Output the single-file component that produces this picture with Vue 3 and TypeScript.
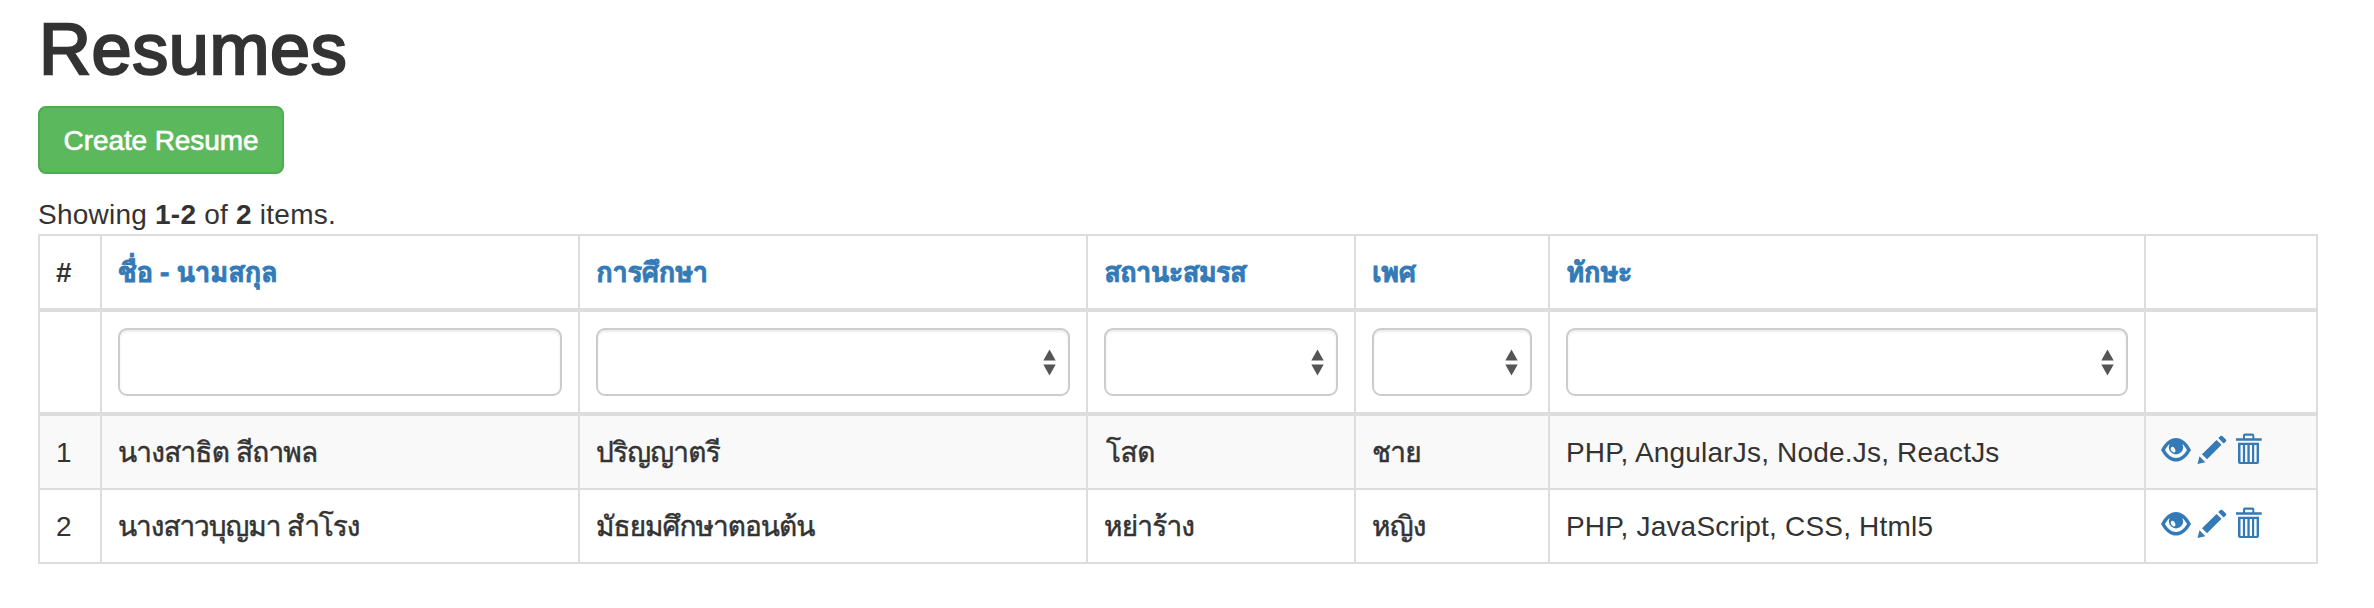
<script setup lang="ts">
type FilterKind = 'none' | 'text' | 'select'

interface Column {
  key: string
  label: string
  filter: FilterKind
}

interface Resume {
  id: number
  name: string
  education: string
  status: string
  gender: string
  skills: string
}

const columns: Column[] = [
  { key: 'name', label: 'ชื่อ - นามสกุล', filter: 'text' },
  { key: 'education', label: 'การศึกษา', filter: 'select' },
  { key: 'status', label: 'สถานะสมรส', filter: 'select' },
  { key: 'gender', label: 'เพศ', filter: 'select' },
  { key: 'skills', label: 'ทักษะ', filter: 'select' },
]

const resumes: Resume[] = [
  { id: 1, name: 'นางสาธิต สีถาพล', education: 'ปริญญาตรี', status: 'โสด', gender: 'ชาย', skills: 'PHP, AngularJs, Node.Js, ReactJs' },
  { id: 2, name: 'นางสาวบุญมา สำโรง', education: 'มัธยมศึกษาตอนต้น', status: 'หย่าร้าง', gender: 'หญิง', skills: 'PHP, JavaScript, CSS, Html5' },
]
</script>

<template>
  <main class="page">
    <h1>Resumes</h1>
    <a class="create">Create Resume</a>
    <div class="summary">Showing <b>1-2</b> of <b>2</b> items.</div>
    <table class="grid">
      <colgroup>
        <col class="c-index" />
        <col v-for="c in columns" :key="c.key" :class="'c-' + c.key" />
        <col class="c-actions" />
      </colgroup>
      <thead>
        <tr class="head">
          <th>#</th>
          <th v-for="c in columns" :key="c.key"><a :class="'h-' + c.key">{{ c.label }}</a></th>
          <th></th>
        </tr>
        <tr class="filters">
          <td></td>
          <td v-for="c in columns" :key="c.key">
            <div class="control">
              <svg v-if="c.filter === 'select'" class="arrows" viewBox="0 0 13 27">
                <path d="M6.500 0.600 12.700 11.500H0.300zM0.300 15.500H12.700L6.500 26.400z" fill="#555" />
              </svg>
            </div>
          </td>
          <td></td>
        </tr>
      </thead>
      <tbody>
        <tr v-for="r in resumes" :key="r.id">
          <td>{{ r.id }}</td>
          <td class="thai name">{{ r.name }}</td>
          <td class="thai education">{{ r.education }}</td>
          <td class="thai status">{{ r.status }}</td>
          <td class="thai gender">{{ r.gender }}</td>
          <td class="skills">{{ r.skills }}</td>
          <td class="tools">
            <div class="actions">
              <svg class="eye" viewBox="0 0 32 34">
                <path fill-rule="evenodd" d="M1 18C5 10.200 10.500 6 16 6s11 4.200 15 12C27 25.400 21.500 29.600 16 29.600S5 25.400 1 18zM5 18C8 23.200 11.800 25.900 16 25.900S24 23.200 27 18C25.600 15.600 24.200 13.700 22.500 12H9.500C7.800 13.700 6.400 15.600 5 18z" />
                <path fill-rule="evenodd" d="M16 8a7.200 7.200 0 1 1 0 14.400A7.200 7.200 0 0 1 16 8zM11.700 14.900c-1.300.7-1.200 2.400-.4 3.700.8 1.400 2.200 2.300 3.400 1.700 1.100-.7.9-2.200.1-3.600-.7-1.300-1.800-2.400-3.100-1.800z" />
              </svg>
              <svg class="pencil" viewBox="0 0 32 34">
                <path d="M1.500 32 3.500 24.300 9.300 30.200zM6 22.200 20.500 7.900 25.500 12.800 11 27.200zM22.300 6.100 24.300 4.100Q25.300 3.200 26.300 4.100L29.900 7.600Q30.800 8.600 29.900 9.600L27.600 11.500z" />
              </svg>
              <svg class="trash" viewBox="0 0 32 34">
                <path fill-rule="evenodd" d="M11 6.300V3.300Q11 1.500 13 1.500H20.300Q22.300 1.500 22.300 3.300V6.300H29.700V8.700H4V6.300zM13 6.300H20.300V3.700H13zM6 10.700H27V30Q27 32 25 32H8Q6 32 6 30zM8.500 13V29.900H10.900V13zM13.100 13V29.900H15.400V13zM17.700 13V29.900H20V13zM22.200 13V29.900H24.600V13z" />
              </svg>
            </div>
          </td>
        </tr>
      </tbody>
    </table>
  </main>
</template>

<style>
body {
  margin: 0;
  background: #fff;
}
</style>

<style scoped>
.page {
  box-sizing: border-box;
  width: 2356px;
  height: 608px;
  padding: 10px 38px 0;
  font: 28px/40px "Liberation Sans", Loma, "Noto Sans Thai Looped", "Noto Sans Thai", sans-serif;
  color: #333;
}
h1 {
  margin: 0 0 17px;
  padding-left: 1px;
  font-size: 72px;
  line-height: 79px;
  font-weight: 400;
  letter-spacing: 0.6px;
  -webkit-text-stroke: 2.4px #333;
}
.create {
  display: flex;
  align-items: center;
  justify-content: center;
  box-sizing: border-box;
  width: 246px;
  height: 68px;
  margin-bottom: 20px;
  padding-top: 2px;
  border: 2px solid #4cae4c;
  border-radius: 8px;
  background: #5cb85c;
  color: #fff;
  letter-spacing: -0.1px;
  -webkit-text-stroke: 0.6px #fff;
}
.summary {
  box-sizing: border-box;
  height: 40px;
  padding-top: 1px;
  letter-spacing: 0.23px;
}
.grid {
  width: 2280px;
  table-layout: fixed;
  border-collapse: separate;
  border-spacing: 0;
  border: solid #ddd;
  border-width: 2px 0 0 2px;
}
.c-index { width: 62px; }
.c-name { width: 478px; }
.c-education { width: 508px; }
.c-status { width: 268px; }
.c-gender { width: 194px; }
.c-skills { width: 596px; }
.c-actions { width: 172px; }
th,
td {
  box-sizing: border-box;
  height: 74px;
  padding: 2px 16px 0;
  border: solid #ddd;
  border-width: 0 2px 2px 0;
  text-align: left;
  vertical-align: middle;
  line-height: 40px;
  white-space: nowrap;
}
th {
  height: 76px;
  border-bottom-width: 4px;
}
th a {
  color: #337ab7;
  letter-spacing: -0.75px;
  -webkit-text-stroke: 0.9px #337ab7;
}
th .h-name {
  letter-spacing: -0.5px;
}
th .h-status {
  letter-spacing: -1.1px;
}
.filters td {
  height: 104px;
  padding-top: 0;
  border-bottom-width: 4px;
}
.control {
  display: flex;
  align-items: center;
  justify-content: flex-end;
  box-sizing: border-box;
  height: 68px;
  padding-right: 12px;
  border: 2px solid #ccc;
  border-radius: 9px;
  box-shadow: inset 0 2px 2px rgba(0, 0, 0, 0.075);
}
.arrows {
  width: 13px;
  height: 27px;
}
tbody tr:first-child td {
  background: #f9f9f9;
}
.thai {
  letter-spacing: -0.8px;
  -webkit-text-stroke: 0.5px #333;
}
tr:last-child .name {
  letter-spacing: -1.05px;
}
tr:last-child .education {
  letter-spacing: -0.95px;
}
tr:first-child .status {
  padding-left: 18px;
  letter-spacing: -0.5px;
}
.skills {
  letter-spacing: 0.19px;
}
.tools {
  padding-top: 0;
}
.actions {
  display: flex;
  gap: 4px;
  height: 40px;
  margin-left: -2px;
}
.actions svg {
  width: 32px;
  height: 34px;
  fill: #337ab7;
}
</style>
